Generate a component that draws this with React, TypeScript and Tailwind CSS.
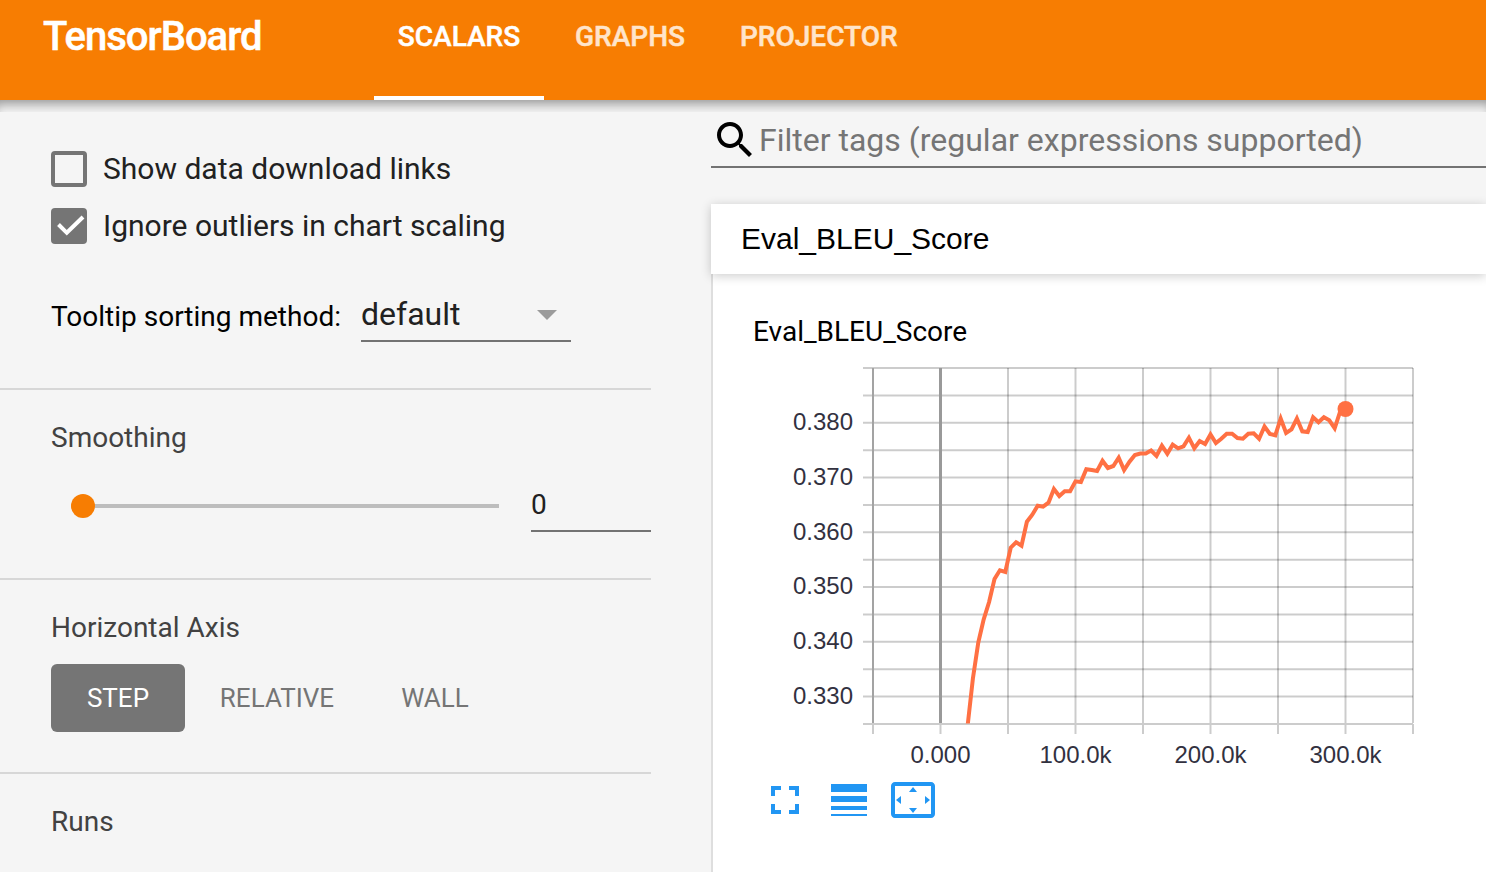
import React from "react";

const STEP_WIDTH = 5.4;
const ORIGIN_X = 940.5;
const FIRST_STEP = 5;
const SCORES = [
  726.7, 678.5, 642.5, 619.3, 602, 579, 570.3, 572, 547.7, 542.3, 545.7, 521.7, 514.7, 505.7, 506.7,
  502.7, 489, 496, 491.3, 491.3, 481.3, 482, 469.3, 470, 471, 460.7, 468, 466, 457.7, 470, 461.7,
  455, 453.5, 453.5, 450.5, 456, 445.7, 453.7, 444.7, 448.3, 446.3, 437.7, 448.3, 441, 444, 434.5,
  443, 438.7, 433.7, 433.7, 438, 438.7, 433.7, 433.3, 438.7, 426.5, 434, 435.3, 418.5, 433, 429.3,
  418.5, 431.3, 432, 417.3, 422.3, 417.3, 420.3, 428.3, 411.7, 409,
];
const LINE = SCORES.map((y, i) => `${(ORIGIN_X + STEP_WIDTH * (i + FIRST_STEP)).toFixed(1)},${y}`).join(" ");
const COLUMNS = [1008, 1075.5, 1143, 1210.5, 1278, 1345.5, 1413];
const ROWS = Array.from({ length: 13 }, (_, i) => 368 + i * 27.38);
const Y_LABELS = ["0.380", "0.370", "0.360", "0.350", "0.340", "0.330"];
const X_LABELS = ["0.000", "100.0k", "200.0k", "300.0k"];

function Chart() {
  return (
    <svg className="block h-[410px] w-[680px]" viewBox="783 362 680 410">
      <defs>
        <clipPath id="plot">
          <rect x="873" y="367" width="541" height="356.5" />
        </clipPath>
      </defs>
      <g stroke="#000" strokeOpacity="0.2" strokeWidth="2">
        {ROWS.map((y) => (
          <line key={y} x1="863" x2="1413" y1={y} y2={y} />
        ))}
        {COLUMNS.map((x) => (
          <line key={x} x1={x} x2={x} y1="368" y2="723" />
        ))}
      </g>
      <line x1="873" x2="873" y1="368" y2="723" stroke="#a3a3a3" strokeWidth="2" />
      <line x1="940.5" x2="940.5" y1="368" y2="723" stroke="#999" strokeWidth="3" />
      <g stroke="#ccc" strokeWidth="2">
        <line x1="863" x2="1413" y1="724" y2="724" />
        {[873, 940.5, ...COLUMNS].map((x) => (
          <line key={x} x1={x} x2={x} y1="724" y2="734" />
        ))}
      </g>
      <polyline points={LINE} fill="none" stroke="#ff7043" strokeWidth="4" clipPath="url(#plot)" />
      <circle cx="1345.5" cy="409" r="8" fill="#ff7043" />
      <g className="font-['Liberation_Sans',Arial,sans-serif] text-[24px]" fill="#32313f">
        {Y_LABELS.map((t, i) => (
          <text key={t} x="853" y={430 + i * 54.8} textAnchor="end">
            {t}
          </text>
        ))}
        {X_LABELS.map((t, i) => (
          <text key={t} x={940.5 + i * 135} y="763" textAnchor="middle">
            {t}
          </text>
        ))}
      </g>
    </svg>
  );
}

function Sidebar() {
  return (
    <aside className="flex w-[651px] shrink-0 flex-col">
      <section className="flex h-[290px] flex-col border-b-2 border-[#d7d7d7] pt-[51px] pl-[51px]">
        <label className="flex h-9 items-center gap-4">
          <span className="size-9 rounded-[4px] border-4 border-[#757575]" />
          <span className="text-[30px] leading-9 text-[#212121]">Show data download links</span>
        </label>
        <label className="mt-[21px] flex h-9 items-center gap-4">
          <span className="flex size-9 items-center justify-center rounded-[4px] bg-[#757575]">
            <svg className="size-9" viewBox="0 0 36 36" fill="none" stroke="#fff" strokeWidth="4">
              <path d="M7.5 16.5 L15.8 24.8 L32 9" />
            </svg>
          </span>
          <span className="text-[30px] leading-9 text-[#212121]">Ignore outliers in chart scaling</span>
        </label>
        <div className="mt-[46px] flex h-[52px]">
          <span className="w-[310px] pt-[9px] text-[28px] leading-9 text-black">Tooltip sorting method:</span>
          <div className="flex w-[210px] items-start justify-between border-b-2 border-[#737373] pt-[6px] pr-[14px]">
            <span className="text-[32px] leading-9 text-[#212121]">default</span>
            <svg className="mt-[14px] h-[10px] w-5" viewBox="0 0 20 10">
              <path d="M0 0h20L10 10z" fill="#9b9b9b" />
            </svg>
          </div>
        </div>
      </section>
      <section className="flex h-[190px] flex-col border-b-2 border-[#d7d7d7] pt-[30px] pl-[51px]">
        <h3 className="text-[28px] leading-9 text-[#424242]">Smoothing</h3>
        <div className="mt-[26px] flex h-[48px]">
          <div className="ml-5 flex h-[48px] w-[428px] items-center">
            <span className="size-6 shrink-0 rounded-full bg-[#f77d02]" />
            <span className="h-1 flex-1 bg-[#bdbdbd]" />
          </div>
          <span className="ml-8 h-[50px] w-[120px] border-b-2 border-[#737373] pt-[5px] text-[28px] leading-9 text-[#212121]">
            0
          </span>
        </div>
      </section>
      <section className="flex h-[194px] flex-col border-b-2 border-[#d7d7d7] pt-[30px] pl-[51px]">
        <h3 className="text-[28px] leading-9 text-[#424242]">Horizontal Axis</h3>
        <div className="mt-[18px] flex h-[68px] items-center text-[26px] leading-9 text-[#757575]">
          <button className="h-[68px] w-[134px] rounded-[6px] bg-[#757575] text-white">STEP</button>
          <button className="w-[184px]">RELATIVE</button>
          <button className="w-[132px]">WALL</button>
        </div>
      </section>
      <section className="pt-[30px] pl-[51px]">
        <h3 className="text-[28px] leading-9 text-[#424242]">Runs</h3>
      </section>
    </aside>
  );
}

export default function App() {
  return (
    <div className="flex h-[872px] w-[1486px] flex-col overflow-hidden bg-[#f5f5f5] font-[Roboto,sans-serif] whitespace-nowrap">
      <header className="relative z-10 flex h-[100px] shrink-0 bg-[#f77d02] font-medium text-white [-webkit-text-stroke:0.5px]">
        <h1 className="w-[374px] pt-[13px] pl-[43px] text-[40px] leading-[48px] tracking-[-1px]">TensorBoard</h1>
        <nav className="flex text-[28px]">
          <a className="h-[100px] w-[170px] border-b-4 border-white pt-[13px] text-center leading-[48px]">SCALARS</a>
          <a className="w-[171px] pt-[13px] pl-[31px] leading-[48px] text-[#ffe5cb]">GRAPHS</a>
          <a className="pt-[13px] pl-[25px] leading-[48px] text-[#ffe5cb]">PROJECTOR</a>
        </nav>
        <div className="pointer-events-none absolute top-full left-0 h-3 w-full shadow-[inset_0_10px_12px_-6px_rgba(0,0,0,0.4)]" />
      </header>
      <div className="flex min-h-0 flex-1">
        <Sidebar />
        <main className="ml-[60px] flex w-[775px] flex-col">
          <div className="flex h-[68px] border-b-2 border-[#737373] pt-4">
            <svg className="size-12" viewBox="0 0 24 24">
              <path d="M15.5 14h-.79l-.28-.27C15.41 12.59 16 11.11 16 9.5 16 5.91 13.09 3 9.5 3S3 5.91 3 9.5 5.91 16 9.5 16c1.61 0 3.09-.59 4.23-1.57l.27.28v.79l5 4.99L20.49 19l-4.99-5zm-6 0C7.01 14 5 11.99 5 9.5S7.01 5 9.5 5 14 7.01 14 9.5 11.99 14 9.5 14z" />
            </svg>
            <span className="text-[32px] leading-[48px] text-[#757575]">Filter tags (regular expressions supported)</span>
          </div>
          <section className="mt-9 flex min-h-0 flex-1 flex-col">
            <h2 className="z-10 h-[70px] shrink-0 bg-white pl-[30px] font-['Liberation_Sans',Arial,sans-serif] text-[30px] leading-[70px] text-black shadow-[0_2px_10px_rgba(0,0,0,0.2)]">
              Eval_BLEU_Score
            </h2>
            <div className="flex min-h-0 flex-1 flex-col border-l-2 border-[#dedede] bg-white pt-10">
              <h3 className="pl-10 text-[28px] leading-9">Eval_BLEU_Score</h3>
              <div className="mt-3 pl-[70px]">
                <Chart />
              </div>
              <div className="mt-1 flex gap-3 pl-12 text-[#2196f3]">
                <svg className="mr-1 size-12" viewBox="0 0 24 24" fill="currentColor">
                  <path d="M7 14H5v5h5v-2H7v-3zm-2-4h2V7h3V5H5v5zm12 7h-3v2h5v-5h-2v3zM14 5v2h3v3h2V5h-5z" />
                </svg>
                <svg className="mr-1 size-12" viewBox="0 0 24 24" fill="currentColor">
                  <path d="M3 17h18v-2H3v2zm0 3h18v-1H3v1zm0-7h18v-3H3v3zm0-9v4h18V4H3z" />
                </svg>
                <svg className="size-12" viewBox="0 0 24 24" fill="currentColor">
                  <path d="M12.01 5.5L10 8h4l-1.99-2.5zM18 10v4l2.5-1.99L18 10zM6 10l-2.5 2.01L6 14v-4zm8 6h-4l2.01 2.5L14 16zm7-13H3c-1.1 0-2 .9-2 2v14c0 1.1.9 2 2 2h18c1.1 0 2-.9 2-2V5c0-1.1-.9-2-2-2zm0 16.01H3V4.99h18v14.02z" />
                </svg>
              </div>
            </div>
          </section>
        </main>
      </div>
    </div>
  );
}
